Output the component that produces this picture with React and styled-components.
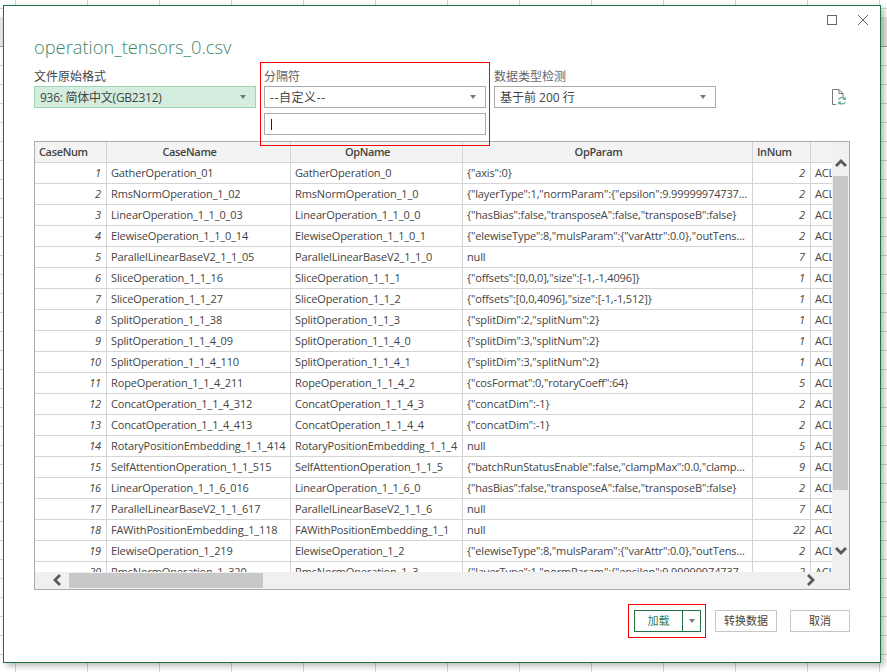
import React from 'react';
import styled, { createGlobalStyle } from 'styled-components';

const ROWS = [
  [1, 'GatherOperation_01', 'GatherOperation_0', '{"axis":0}', 2],
  [2, 'RmsNormOperation_1_02', 'RmsNormOperation_1_0', '{"layerType":1,"normParam":{"epsilon":9.99999974737...', 2],
  [3, 'LinearOperation_1_1_0_03', 'LinearOperation_1_1_0_0', '{"hasBias":false,"transposeA":false,"transposeB":false}', 2],
  [4, 'ElewiseOperation_1_1_0_14', 'ElewiseOperation_1_1_0_1', '{"elewiseType":8,"mulsParam":{"varAttr":0.0},"outTens...', 2],
  [5, 'ParallelLinearBaseV2_1_1_05', 'ParallelLinearBaseV2_1_1_0', 'null', 7],
  [6, 'SliceOperation_1_1_16', 'SliceOperation_1_1_1', '{"offsets":[0,0,0],"size":[-1,-1,4096]}', 1],
  [7, 'SliceOperation_1_1_27', 'SliceOperation_1_1_2', '{"offsets":[0,0,4096],"size":[-1,-1,512]}', 1],
  [8, 'SplitOperation_1_1_38', 'SplitOperation_1_1_3', '{"splitDim":2,"splitNum":2}', 1],
  [9, 'SplitOperation_1_1_4_09', 'SplitOperation_1_1_4_0', '{"splitDim":3,"splitNum":2}', 1],
  [10, 'SplitOperation_1_1_4_110', 'SplitOperation_1_1_4_1', '{"splitDim":3,"splitNum":2}', 1],
  [11, 'RopeOperation_1_1_4_211', 'RopeOperation_1_1_4_2', '{"cosFormat":0,"rotaryCoeff":64}', 5],
  [12, 'ConcatOperation_1_1_4_312', 'ConcatOperation_1_1_4_3', '{"concatDim":-1}', 2],
  [13, 'ConcatOperation_1_1_4_413', 'ConcatOperation_1_1_4_4', '{"concatDim":-1}', 2],
  [14, 'RotaryPositionEmbedding_1_1_414', 'RotaryPositionEmbedding_1_1_4', 'null', 5],
  [15, 'SelfAttentionOperation_1_1_515', 'SelfAttentionOperation_1_1_5', '{"batchRunStatusEnable":false,"clampMax":0.0,"clamp...', 9],
  [16, 'LinearOperation_1_1_6_016', 'LinearOperation_1_1_6_0', '{"hasBias":false,"transposeA":false,"transposeB":false}', 2],
  [17, 'ParallelLinearBaseV2_1_1_617', 'ParallelLinearBaseV2_1_1_6', 'null', 7],
  [18, 'FAWithPositionEmbedding_1_118', 'FAWithPositionEmbedding_1_1', 'null', 22],
  [19, 'ElewiseOperation_1_219', 'ElewiseOperation_1_2', '{"elewiseType":8,"mulsParam":{"varAttr":0.0},"outTens...', 2],
  [20, 'RmsNormOperation_1_320', 'RmsNormOperation_1_3', '{"layerType":1,"normParam":{"epsilon":9.99999974737...', 2],
];

const FONT = '"Open Sans", "Noto Sans CJK SC", sans-serif';

const GlobalStyle = createGlobalStyle`
  html, body {
    margin: 0;
    padding: 0;
    background: #fff;
  }
  body {
    font-family: ${FONT};
    font-size: 12px;
    color: #444;
  }
`;

const Sheet = styled.div`
  width: 887px;
  height: 672px;
  box-sizing: border-box;
  padding: 5px 6px 9px 3px;
  overflow: hidden;
  background:
    linear-gradient(#a0a0a0, #a0a0a0) 0 46px / 100% 1px no-repeat,
    linear-gradient(#e6e6e6, #e6e6e6) 0 17px / 100% 29px no-repeat,
    repeating-linear-gradient(to right, transparent 0 15px, #d4d4d4 15px 16px, transparent 16px 72px),
    repeating-linear-gradient(to bottom, transparent 0 8px, #d4d4d4 8px 9px, transparent 9px 19px),
    #fff;
`;

const Dialog = styled.div`
  height: 100%;
  box-sizing: border-box;
  border: 1px solid #217346;
  background: #fff;
  box-shadow: 3px 3px 6px rgba(0, 0, 0, 0.28);
  padding: 0 30px;
  display: flex;
  flex-direction: column;
`;

const WindowBar = styled.div`
  height: 28px;
  margin-right: -19px;
  padding-top: 8px;
  box-sizing: border-box;
  display: flex;
  justify-content: flex-end;
  align-items: flex-start;
  gap: 19px;
`;

const WindowIcon = styled.svg`
  width: 12px;
  height: 12px;
  fill: none;
  stroke: #666;
  stroke-width: 1;
`;

const Title = styled.h1`
  margin: 0;
  height: 34px;
  font-family: "Open Sans", sans-serif;
  font-weight: 300;
  font-size: 18.3px;
  line-height: 26px;
  color: #3f8766;
`;

const Options = styled.div`
  height: 73px;
  display: flex;
  gap: 8px;
  align-items: flex-start;
`;

const Field = styled.div`
  width: 222px;
  display: flex;
  flex-direction: column;
  position: relative;
`;

const FieldLabel = styled.label`
  height: 18px;
  line-height: 17px;
  font-size: 12px;
  color: ${({ $muted }) => ($muted ? '#666' : '#444')};
`;

const Select = styled.div`
  height: 22px;
  box-sizing: border-box;
  padding: 0 5px;
  display: flex;
  align-items: center;
  justify-content: space-between;
  font-size: 12px;
  letter-spacing: ${({ $tracking }) => $tracking || 0}px;
  color: #444;
  border: 1px solid ${({ $active }) => ($active ? '#9fd5b7' : '#ababab')};
  background: ${({ $active }) => ($active ? '#d3eedf' : '#fff')};
`;

const Caret = styled.span`
  width: 0;
  height: 0;
  margin-right: 4px;
  border-left: 3.5px solid transparent;
  border-right: 3.5px solid transparent;
  border-top: 4px solid #777;
`;

const TextBox = styled.div`
  height: 22px;
  margin-top: 5px;
  box-sizing: border-box;
  padding-left: 6px;
  border: 1px solid #ababab;
  display: flex;
  align-items: center;
`;

const TextCursor = styled.span`
  width: 1px;
  height: 11px;
  background: #222;
`;

const Annotation = styled.div`
  position: absolute;
  z-index: 3;
  border: 1px solid #f00;
  pointer-events: none;
  top: ${({ $top }) => $top}px;
  right: ${({ $right }) => $right}px;
  bottom: ${({ $bottom }) => $bottom}px;
  left: ${({ $left }) => $left}px;
`;

const RefreshFile = styled.svg`
  width: 16px;
  height: 18px;
  margin: 20px 3px 0 auto;
`;

const Preview = styled.div`
  height: 449px;
  box-sizing: border-box;
  position: relative;
  overflow: hidden;
  border: 1px solid #ababab;
`;

const Row = styled.div`
  display: grid;
  grid-template-columns: 72px 184px 172px 290px 58px 100px;
  height: 21px;
  box-sizing: border-box;
  border-bottom: 1px solid #d4d4d4;
  background: ${({ $head }) => ($head ? '#f3f3f3' : '#fff')};
`;

const Cell = styled.div`
  box-sizing: border-box;
  padding: 0 4px;
  border-right: 1px solid #d4d4d4;
  line-height: 20px;
  font-size: 11px;
  letter-spacing: -0.14px;
  white-space: nowrap;
  overflow: hidden;
  color: #444;
  text-align: ${({ $align }) => $align || 'left'};
  font-style: ${({ $num }) => ($num ? 'italic' : 'normal')};
  padding-right: ${({ $num }) => ($num ? 5 : 4)}px;
`;

const HeadCell = styled(Cell)`
  font-weight: 600;
  letter-spacing: -0.35px;
  color: #444;
  padding-right: 22px;
`;

const VerticalBar = styled.div`
  position: absolute;
  top: 0;
  right: 0;
  bottom: 0;
  width: 17px;
  background: #f0f0f0;
`;

const HorizontalBar = styled.div`
  position: absolute;
  left: 0;
  right: 0;
  bottom: 0;
  height: 17px;
  background: #f0f0f0;
`;

const Thumb = styled.div`
  position: absolute;
  background: #c8c8c8;
  left: ${({ $left }) => $left}px;
  top: ${({ $top }) => $top}px;
  width: ${({ $width }) => $width}px;
  height: ${({ $height }) => $height}px;
`;

const ArrowGlyph = styled.svg`
  position: absolute;
  width: 12px;
  height: 12px;
  left: ${({ $left }) => $left}px;
  top: ${({ $top }) => $top}px;
  fill: none;
  stroke: #595959;
  stroke-width: 2.8;
`;

const Footer = styled.div`
  flex: 1;
  display: flex;
  justify-content: flex-end;
  align-items: flex-start;
  padding-top: 20px;
  gap: 13px;
`;

const SplitWrap = styled.div`
  position: relative;
  margin-right: 1px;
  display: flex;
  width: 67px;
  height: 22px;
  box-sizing: border-box;
  border: 1px solid #217346;
`;

const SplitMain = styled.div`
  flex: 1;
  text-align: center;
  line-height: 20px;
  font-size: 11px;
  color: #2f7d57;
`;

const SplitMenu = styled.div`
  width: 17px;
  border-left: 1px solid #217346;
  display: flex;
  align-items: center;
  justify-content: center;

  ${Caret} {
    margin: 0;
  }
`;

const Button = styled.div`
  width: ${({ $width }) => $width}px;
  height: 22px;
  box-sizing: border-box;
  border: 1px solid #c6c6c6;
  text-align: center;
  line-height: 20px;
  font-size: 11px;
  color: #444;
`;

function Arrow({ dir, left, top }) {
  const points = {
    up: '1,9 6,4 11,9',
    down: '1,3 6,8 11,3',
    left: '9,1 4,6 9,11',
    right: '3,1 8,6 3,11',
  };
  return (
    <ArrowGlyph $left={left} $top={top} viewBox="0 0 12 12">
      <polyline points={points[dir]} />
    </ArrowGlyph>
  );
}

function App() {
  return (
    <>
      <GlobalStyle />
      <Sheet>
        <Dialog>
          <WindowBar>
            <WindowIcon viewBox="0 0 12 12">
              <rect x="1.5" y="1.5" width="9" height="9" />
            </WindowIcon>
            <WindowIcon viewBox="0 0 12 12">
              <path d="M1 1 L11 11 M11 1 L1 11" />
            </WindowIcon>
          </WindowBar>
          <Title>operation_tensors_0.csv</Title>
          <Options>
            <Field>
              <FieldLabel>文件原始格式</FieldLabel>
              <Select $active $tracking={-0.25}>
                936: 简体中文(GB2312)
                <Caret />
              </Select>
            </Field>
            <Field>
              <Annotation $top={-6} $right={-4} $bottom={-11} $left={-4} />
              <FieldLabel $muted>分隔符</FieldLabel>
              <Select $tracking={0.6}>
                --自定义--
                <Caret />
              </Select>
              <TextBox>
                <TextCursor />
              </TextBox>
            </Field>
            <Field>
              <FieldLabel $muted>数据类型检测</FieldLabel>
              <Select>
                基于前 200 行
                <Caret />
              </Select>
            </Field>
            <RefreshFile viewBox="0 0 16 18">
              <path d="M5 16.5 H1.5 V1.5 H8 L12 5.5 V9 M8 1.5 V5.5 H12" fill="none" stroke="#777" strokeWidth="1" />
              <path d="M7.5 11.5 A4 4 0 0 1 14 11 M14.5 14 A4 4 0 0 1 8 14.5" fill="none" stroke="#5fb08d" strokeWidth="1.4" />
              <path d="M14.8 8.5 V12 H11.5 Z M7.2 17 V13.5 H10.5 Z" fill="#5fb08d" />
            </RefreshFile>
          </Options>
          <Preview>
            <Row $head>
              <HeadCell>CaseNum</HeadCell>
              <HeadCell $align="center">CaseName</HeadCell>
              <HeadCell $align="center">OpName</HeadCell>
              <HeadCell $align="center">OpParam</HeadCell>
              <HeadCell>InNum</HeadCell>
              <HeadCell />
            </Row>
            {ROWS.map(([num, caseName, opName, opParam, inNum]) => (
              <Row key={num}>
                <Cell $num $align="right">{num}</Cell>
                <Cell>{caseName}</Cell>
                <Cell>{opName}</Cell>
                <Cell>{opParam}</Cell>
                <Cell $num $align="right">{inNum}</Cell>
                <Cell>ACL</Cell>
              </Row>
            ))}
            <VerticalBar>
              <Arrow dir="up" left={3} top={15} />
              <Thumb $left={1} $top={34} $width={15} $height={314} />
              <Arrow dir="down" left={3} top={403} />
            </VerticalBar>
            <HorizontalBar>
              <Arrow dir="left" left={16} top={2} />
              <Thumb $left={34} $top={1} $width={194} $height={15} />
              <Arrow dir="right" left={770} top={2} />
            </HorizontalBar>
          </Preview>
          <Footer>
            <SplitWrap>
              <Annotation $top={-7} $right={-6} $bottom={-7} $left={-7} />
              <SplitMain>加载</SplitMain>
              <SplitMenu>
                <Caret />
              </SplitMenu>
            </SplitWrap>
            <Button $width={62}>转换数据</Button>
            <Button $width={60}>取消</Button>
          </Footer>
        </Dialog>
      </Sheet>
    </>
  );
}

export default App;
